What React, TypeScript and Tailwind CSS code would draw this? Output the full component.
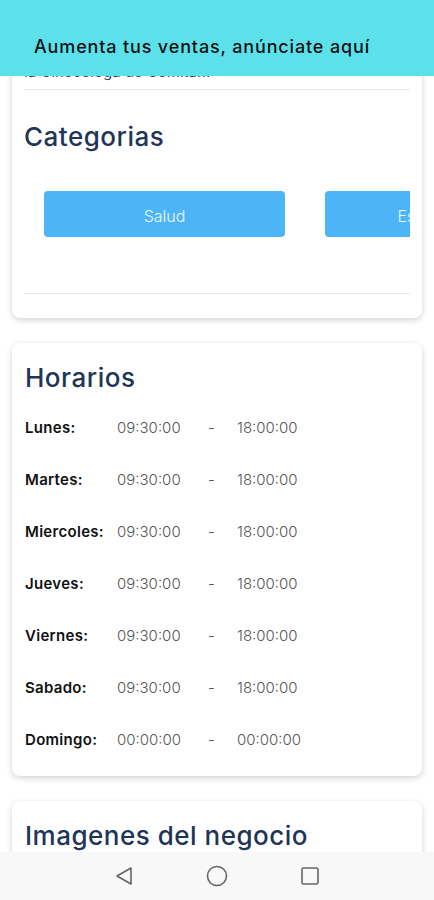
import React from "react";

const horarios = [
  { dia: "Lunes:", abre: "09:30:00", cierra: "18:00:00" },
  { dia: "Martes:", abre: "09:30:00", cierra: "18:00:00" },
  { dia: "Miercoles:", abre: "09:30:00", cierra: "18:00:00" },
  { dia: "Jueves:", abre: "09:30:00", cierra: "18:00:00" },
  { dia: "Viernes:", abre: "09:30:00", cierra: "18:00:00" },
  { dia: "Sabado:", abre: "09:30:00", cierra: "18:00:00" },
  { dia: "Domingo:", abre: "00:00:00", cierra: "00:00:00" },
];

export default function App() {
  return (
    <div className="relative h-[900px] w-[434px] overflow-hidden bg-white font-['Inter','Noto_Sans',sans-serif]">
      {/* Scrolled content */}
      <div className="flex flex-col gap-[25px] px-3">
        {/* Categorias card */}
        <div className="rounded-b-lg bg-white px-3 pb-6 pt-[62px] shadow-[0_2px_6px_rgba(0,0,0,0.18)]">
          <p className="text-[15px] leading-5 text-gray-700">la Ginecóloga de Comitán.</p>
          <div className="mt-[7px] h-px bg-gray-200" />
          <h2 className="mt-[31px] text-[26px] font-medium leading-8 tracking-[0.5px] text-[#1e3557]">Categorias</h2>
          <div className="mt-[38px] flex overflow-hidden">
            <button className="mx-5 h-[46px] w-[241px] shrink-0 rounded bg-[#4db4f8] pt-1 text-[16px] font-light text-white/90">
              Salud
            </button>
            <button className="mx-5 h-[46px] w-[241px] shrink-0 rounded bg-[#4db4f8] pt-1 text-[16px] font-light text-white/90">
              Especialistas
            </button>
          </div>
          <div className="mt-[56px] h-px bg-gray-200" />
        </div>

        {/* Horarios card */}
        <div className="rounded-lg bg-white pb-[10px] pl-[13px] pr-3 pt-[19px] shadow-[0_2px_6px_rgba(0,0,0,0.18)]">
          <h2 className="text-[26px] font-medium leading-8 tracking-[0.5px] text-[#1e3557]">Horarios</h2>
          <div className="mt-2 flex flex-col">
            {horarios.map((h) => (
              <div key={h.dia} className="flex h-[52px] items-center text-[15px]">
                <span className="w-[92px] font-semibold tracking-[0.3px] text-[#111]">{h.dia}</span>
                <span className="w-[91px] font-light text-[#555]">{h.abre}</span>
                <span className="w-[29px] font-light text-[#555]">-</span>
                <span className="font-light text-[#555]">{h.cierra}</span>
              </div>
            ))}
          </div>
        </div>

        {/* Imagenes card */}
        <div className="h-[200px] rounded-lg bg-white px-[13px] pt-[19px] shadow-[0_2px_6px_rgba(0,0,0,0.18)]">
          <h2 className="text-[26px] font-medium leading-8 tracking-[0.5px] text-[#1e3557]">Imagenes del negocio</h2>
        </div>
      </div>

      {/* Top banner overlay */}
      <div className="absolute inset-x-0 top-0 flex h-[76px] items-end bg-[#5ce1eb] pb-[16px] pl-[34px]">
        <span className="text-[18px] font-medium tracking-[0.85px] text-[#111]">Aumenta tus ventas, anúnciate aquí</span>
      </div>

      {/* Android nav bar */}
      <div className="absolute inset-x-0 bottom-0 flex h-[48px] items-center justify-center gap-[72px] bg-[#f8f8f8]">
        <svg width="20" height="20" viewBox="0 0 20 20" fill="none" stroke="#666" strokeWidth="1.6" strokeLinejoin="round">
          <path d="M17 2 L3 10 L17 18 Z" />
        </svg>
        <svg width="22" height="22" viewBox="0 0 22 22" fill="none" stroke="#666" strokeWidth="1.6">
          <circle cx="11" cy="11" r="9.5" />
        </svg>
        <svg width="20" height="20" viewBox="0 0 20 20" fill="none" stroke="#666" strokeWidth="1.6">
          <rect x="2" y="2" width="16" height="16" rx="1.5" />
        </svg>
      </div>
    </div>
  );
}
